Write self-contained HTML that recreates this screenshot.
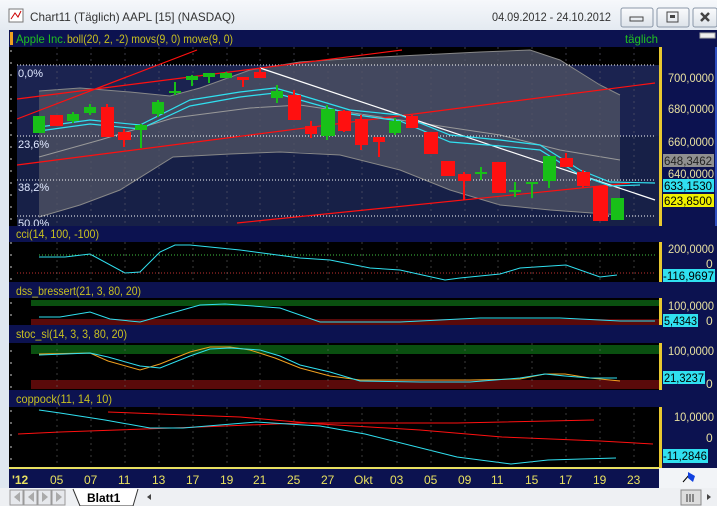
<!DOCTYPE html>
<html><head><meta charset="utf-8"><style>
html,body{margin:0;padding:0;width:717px;height:506px;overflow:hidden;background:#eef2f6;}
svg{display:block;font-family:"Liberation Sans",sans-serif;}
</style></head><body>
<svg width="717" height="506" viewBox="0 0 717 506" xmlns="http://www.w3.org/2000/svg">
<defs>
<linearGradient id="tb" x1="0" y1="0" x2="0" y2="1"><stop offset="0" stop-color="#f6f8fb"/><stop offset="1" stop-color="#e4eaf1"/></linearGradient>
<linearGradient id="btn" x1="0" y1="0" x2="0" y2="1"><stop offset="0" stop-color="#fafbfd"/><stop offset="1" stop-color="#dde3ea"/></linearGradient>
</defs>
<rect x="0" y="0" width="717" height="30" fill="url(#tb)"/>
<rect x="9" y="9" width="14" height="13" fill="#fff" stroke="#777"/>
<path d="M11 19 L15 13 L18 17 L21 11" stroke="#c00" fill="none"/>
<text x="30" y="21" font-size="12" fill="#333" textLength="205" lengthAdjust="spacingAndGlyphs">Chart11 (Täglich)  AAPL [15] (NASDAQ)</text>
<text x="492" y="21" font-size="12" fill="#333" textLength="119" lengthAdjust="spacingAndGlyphs">04.09.2012 - 24.10.2012</text>
<rect x="621" y="8" width="32" height="19" rx="2" fill="url(#btn)" stroke="#8a97a8"/>
<rect x="630" y="17" width="13" height="4" fill="none" stroke="#444"/>
<rect x="657" y="8" width="32" height="19" rx="2" fill="url(#btn)" stroke="#8a97a8"/>
<rect x="667" y="12" width="11" height="10" fill="none" stroke="#444"/><rect x="670" y="15" width="5" height="3" fill="#444"/>
<rect x="693" y="8" width="24" height="19" rx="2" fill="url(#btn)" stroke="#8a97a8"/>
<path d="M701 13 L709 21 M709 13 L701 21" stroke="#444" stroke-width="2.5"/>

<rect x="0" y="30" width="9" height="458" fill="#dfe7f0"/>
<rect x="9" y="30" width="708" height="17" fill="#0c1250"/>
<rect x="10" y="32" width="3" height="13" fill="#f0a020"/>
<text x="16" y="43" font-size="12" fill="#20c020" textLength="50" lengthAdjust="spacingAndGlyphs">Apple Inc.</text>
<text x="67" y="43" font-size="12" fill="#c8c020" textLength="166" lengthAdjust="spacingAndGlyphs">boll(20, 2, -2) movs(9, 0) move(9, 0)</text>
<text x="625" y="43" font-size="12" fill="#20c020" textLength="33" lengthAdjust="spacingAndGlyphs">täglich</text>
<rect x="700" y="33" width="15" height="5" fill="#eee" stroke="#aaa"/>

<rect x="9" y="47" width="650" height="179" fill="#000"/>
<rect x="17" y="65" width="642" height="161" fill="#1b2350"/>
<rect x="17" y="136" width="642" height="90" fill="#172047"/>
<polygon fill="#4a4f62" opacity="0.85" points="39,91 80,88 130,92 170,96 200,88 250,70 300,62 360,58 400,56 440,54 480,52 530,50 560,60 600,85 620,95 620,215 550,210 500,205 450,190 400,170 340,155 300,152 280,152 230,154 173,157 120,190 80,205 39,217"/>
<polyline fill="none" stroke="#888" points="39,91 80,88 130,92 170,96 200,88 250,70 300,62 360,58 400,56 440,54 480,52 530,50 560,60 600,85 620,95"/>
<polyline fill="none" stroke="#888" points="39,217 80,205 120,190 173,157 230,154 280,152 340,155 400,170 450,190 500,205 550,210 620,215"/>
<polyline fill="none" stroke="#999" points="39,157 100,140 173,118 250,108 300,105 400,120 500,135 560,150 620,160"/>
<g stroke="#fff" stroke-dasharray="1,2">
<line x1="17" y1="65" x2="655" y2="65"/><line x1="17" y1="136" x2="655" y2="136"/>
<line x1="17" y1="180" x2="655" y2="180"/><line x1="17" y1="216" x2="655" y2="216"/>
</g>
<g fill="#e0e8ff" font-size="11"><text x="18" y="77">0,0%</text><text x="18" y="148">23,6%</text><text x="18" y="191">38,2%</text><text x="18" y="227">50,0%</text></g>
<g stroke="#556" stroke-dasharray="2,4" opacity="0.7">
<path d="M57 47V226M91 47V226M125 47V226M159 47V226M193 47V226M227 47V226M260 47V226M294 47V226M328 47V226M362 47V226M397 47V226M431 47V226M465 47V226M498 47V226M532 47V226M566 47V226M600 47V226M634 47V226"/>
</g>
<g stroke="#ff1010" stroke-width="1.2" fill="none">
<line x1="17" y1="119" x2="197" y2="50"/>
<line x1="17" y1="99" x2="402" y2="50"/>
<line x1="17" y1="165" x2="655" y2="83"/>
<line x1="237" y1="223" x2="630" y2="183"/>
</g>
<line x1="260" y1="68" x2="655" y2="200" stroke="#fff" stroke-width="1.2"/>
<polyline fill="none" stroke="#30e0f0" stroke-width="1.2" points="39,127 90,120 140,125 190,100 240,92 275,88 300,95 350,110 400,115 450,135 500,140 540,145 580,170 610,182 655,183"/>
<polyline fill="none" stroke="#30e0f0" stroke-width="1.2" points="39,131 90,124 140,129 190,106 240,97 275,93 300,100 350,114 400,121 450,142 500,146 540,150 580,175 610,186 640,185"/>
<g stroke-width="2">
<g fill="#18c018" stroke="#18c018">
<rect x="34" y="117" width="10" height="15"/>
<line x1="73" y1="112" x2="73" y2="123"/><rect x="68" y="115" width="10" height="5"/>
<line x1="90" y1="104" x2="90" y2="115"/><rect x="85" y="108" width="10" height="4"/>
<line x1="141" y1="124" x2="141" y2="148"/><rect x="136" y="126" width="10" height="3"/>
<line x1="158" y1="100" x2="158" y2="117"/><rect x="153" y="103" width="10" height="10"/>
<line x1="175" y1="82" x2="175" y2="95"/><line x1="169" y1="92" x2="181" y2="92"/>
<line x1="192" y1="75" x2="192" y2="86"/><rect x="187" y="77" width="10" height="2"/>
<line x1="209" y1="73" x2="209" y2="83"/><rect x="204" y="74" width="10" height="2"/>
<line x1="226" y1="72" x2="226" y2="77"/><rect x="221" y="74" width="10" height="3"/>
<line x1="277" y1="85" x2="277" y2="103"/><rect x="272" y="92" width="10" height="5"/>
<line x1="327" y1="105" x2="327" y2="140"/><rect x="322" y="110" width="12" height="25"/>
<line x1="395" y1="118" x2="395" y2="135"/><rect x="390" y="122" width="10" height="10"/>
<line x1="481" y1="167" x2="481" y2="180"/><line x1="475" y1="173" x2="487" y2="173"/>
<line x1="515" y1="182" x2="515" y2="197"/><line x1="509" y1="191" x2="521" y2="191"/>
<line x1="532" y1="182" x2="532" y2="198"/><line x1="526" y1="183" x2="538" y2="183"/>
<line x1="549" y1="157" x2="549" y2="188"/><rect x="544" y="157" width="11" height="23"/>
<line x1="617" y1="198" x2="617" y2="220"/><rect x="612" y="199" width="11" height="20"/>
</g>
<g fill="#ff1010" stroke="#ff1010">
<rect x="51" y="116" width="11" height="9"/>
<line x1="107" y1="104" x2="107" y2="136"/><rect x="102" y="108" width="11" height="28"/>
<line x1="124" y1="129" x2="124" y2="147"/><rect x="119" y="133" width="11" height="6"/>
<line x1="243" y1="78" x2="243" y2="87"/><rect x="238" y="78" width="10" height="1"/>
<line x1="260" y1="68" x2="260" y2="77"/><rect x="255" y="73" width="10" height="4"/>
<line x1="294" y1="90" x2="294" y2="119"/><rect x="289" y="96" width="11" height="23"/>
<line x1="311" y1="121" x2="311" y2="138"/><rect x="306" y="127" width="10" height="6"/>
<line x1="344" y1="110" x2="344" y2="132"/><rect x="339" y="112" width="11" height="18"/>
<line x1="361" y1="115" x2="361" y2="150"/><rect x="356" y="120" width="11" height="24"/>
<line x1="379" y1="138" x2="379" y2="157"/><rect x="374" y="138" width="10" height="3"/>
<line x1="412" y1="115" x2="412" y2="128"/><rect x="407" y="117" width="10" height="10"/>
<rect x="425" y="133" width="12" height="20"/>
<rect x="442" y="162" width="12" height="13"/>
<line x1="464" y1="172" x2="464" y2="200"/><rect x="459" y="175" width="11" height="5"/>
<rect x="493" y="163" width="12" height="29"/>
<line x1="566" y1="153" x2="566" y2="166"/><rect x="561" y="159" width="11" height="7"/>
<line x1="583" y1="170" x2="583" y2="188"/><rect x="578" y="173" width="11" height="12"/>
<rect x="594" y="187" width="13" height="33"/>
</g></g>

<rect x="9" y="47" width="8" height="420" fill="#000"/>
<g stroke="#ccc" stroke-dasharray="2,10"><line x1="11" y1="50" x2="11" y2="466"/></g>

<rect x="659" y="47" width="58" height="180" fill="#0c1250"/>
<rect x="659" y="47" width="3" height="180" fill="#e8c830"/>
<rect x="715" y="47" width="2" height="180" fill="#3050c0"/>
<g fill="#e8e0a0" font-size="12">
<text x="668" y="82" textLength="46" lengthAdjust="spacingAndGlyphs">700,0000</text><text x="668" y="113" textLength="46" lengthAdjust="spacingAndGlyphs">680,0000</text><text x="668" y="146" textLength="46" lengthAdjust="spacingAndGlyphs">660,0000</text><text x="668" y="178" textLength="46" lengthAdjust="spacingAndGlyphs">640,0000</text>
</g>
<rect x="663" y="154" width="51" height="13" fill="#909090"/><text x="664" y="165" font-size="12" fill="#222" textLength="48" lengthAdjust="spacingAndGlyphs">648,3462</text>
<rect x="663" y="179" width="51" height="13" fill="#30e0f0"/><text x="664" y="190" font-size="12" fill="#000" textLength="48" lengthAdjust="spacingAndGlyphs">633,1530</text>
<rect x="663" y="194" width="51" height="13" fill="#f0f000"/><text x="664" y="205" font-size="12" fill="#000" textLength="48" lengthAdjust="spacingAndGlyphs">623,8500</text>

<g font-size="12" fill="#c8c020">
<rect x="9" y="226" width="708" height="16" fill="#0c1250"/><text x="16" y="238" textLength="83" lengthAdjust="spacingAndGlyphs">cci(14, 100, -100)</text>
<rect x="9" y="282" width="708" height="16" fill="#0c1250"/><text x="16" y="295" textLength="125" lengthAdjust="spacingAndGlyphs">dss_bressert(21, 3, 80, 20)</text>
<rect x="9" y="325" width="708" height="18" fill="#0c1250"/><text x="16" y="338" textLength="111" lengthAdjust="spacingAndGlyphs">stoc_sl(14, 3, 3, 80, 20)</text>
<rect x="9" y="390" width="708" height="17" fill="#0c1250"/><text x="16" y="403" textLength="96" lengthAdjust="spacingAndGlyphs">coppock(11, 14, 10)</text>
</g>
<rect x="17" y="242" width="642" height="40" fill="#000"/>
<rect x="17" y="298" width="642" height="27" fill="#000"/>
<rect x="17" y="343" width="642" height="47" fill="#000"/>
<rect x="17" y="407" width="642" height="61" fill="#000"/>
<line x1="39" y1="255" x2="655" y2="255" stroke="#40c040" stroke-dasharray="1,2"/>
<line x1="17" y1="273" x2="655" y2="273" stroke="#c03030" stroke-dasharray="1,2"/>
<polyline fill="none" stroke="#30e0f0" points="39,257 65,257 90,254 125,273 140,272 160,252 175,245 190,245 240,250 300,258 330,260 370,268 400,270 445,280 460,278 500,274 520,268 566,265 600,277 617,275"/>
<rect x="31" y="300" width="628" height="6" fill="#0a5010"/>
<rect x="31" y="319" width="628" height="6" fill="#5a0a0a"/>
<polyline fill="none" stroke="#30e0f0" points="39,317 60,317 90,312 110,319 140,322 200,305 225,304 280,308 320,322 400,322 440,320 480,318 560,318 620,321 655,321"/>
<rect x="31" y="345" width="628" height="9" fill="#0a5010"/>
<rect x="31" y="380" width="628" height="9" fill="#5a0a0a"/>
<polyline fill="none" stroke="#f0a020" points="39,354 90,353 108,361 140,370 160,364 190,352 210,347 230,347 250,350 275,358 300,368 330,376 360,380 410,380 470,380 520,379 545,374 565,374 590,378 620,381"/>
<polyline fill="none" stroke="#30e0f0" points="39,355 90,353 108,357 140,366 160,368 190,356 210,349 230,348 260,350 280,356 300,365 330,372 360,381 420,382 470,382 520,378 545,374 565,376 590,378 617,378"/>
<polyline fill="none" stroke="#ff1010" points="18,434 60,432 200,427 300,423 457,423 594,420"/>
<polyline fill="none" stroke="#ff1010" points="108,412 240,417 320,424 420,430 502,437 600,441 653,444"/>
<polyline fill="none" stroke="#30e0f0" points="39,410 60,413 105,420 150,428 183,428 256,422 320,426 365,434 457,457 511,464 548,460 616,458"/>
<g stroke="#666" stroke-dasharray="2,4" opacity="0.6">
<path d="M57 242V282M91 242V282M125 242V282M159 242V282M193 242V282M227 242V282M260 242V282M294 242V282M328 242V282M362 242V282M397 242V282M431 242V282M465 242V282M498 242V282M532 242V282M566 242V282M600 242V282M634 242V282"/>
<path d="M57 407V468M91 407V468M125 407V468M159 407V468M193 407V468M227 407V468M260 407V468M294 407V468M328 407V468M362 407V468M397 407V468M431 407V468M465 407V468M498 407V468M532 407V468M566 407V468M600 407V468M634 407V468"/>
<path d="M57 343V390M125 343V390M193 343V390M260 343V390M328 343V390M397 343V390M465 343V390M532 343V390M600 343V390"/>
</g>
<g>
<rect x="659" y="242" width="58" height="40" fill="#0c1250"/><rect x="659" y="242" width="3" height="40" fill="#e8c830"/>
<rect x="659" y="298" width="58" height="27" fill="#0c1250"/><rect x="659" y="298" width="3" height="27" fill="#e8c830"/>
<rect x="659" y="343" width="58" height="47" fill="#0c1250"/><rect x="659" y="343" width="3" height="47" fill="#e8c830"/>
<rect x="659" y="407" width="58" height="61" fill="#0c1250"/><rect x="659" y="407" width="3" height="61" fill="#e8c830"/>
</g>
<g fill="#e8e0a0" font-size="12">
<text x="668" y="253" textLength="46" lengthAdjust="spacingAndGlyphs">200,0000</text><text x="706" y="268">0</text>
<text x="668" y="310" textLength="46" lengthAdjust="spacingAndGlyphs">100,0000</text><text x="706" y="325">0</text>
<text x="668" y="355" textLength="46" lengthAdjust="spacingAndGlyphs">100,0000</text><text x="706" y="388">0</text>
<text x="674" y="421" textLength="40" lengthAdjust="spacingAndGlyphs">10,0000</text><text x="706" y="442">0</text>
</g>
<rect x="663" y="269" width="52" height="13" fill="#30e0f0"/><text x="663" y="280" font-size="12" fill="#000" textLength="51" lengthAdjust="spacingAndGlyphs">-116,9697</text>
<rect x="663" y="314" width="35" height="13" fill="#30e0f0"/><text x="664" y="325" font-size="12" fill="#000" textLength="33" lengthAdjust="spacingAndGlyphs">5,4343</text>
<rect x="663" y="371" width="42" height="13" fill="#30e0f0"/><text x="664" y="382" font-size="12" fill="#000" textLength="40" lengthAdjust="spacingAndGlyphs">21,3237</text>
<rect x="663" y="449" width="45" height="14" fill="#30e0f0"/><text x="663" y="460" font-size="12" fill="#000" textLength="44" lengthAdjust="spacingAndGlyphs">-11,2846</text>

<rect x="9" y="468" width="650" height="20" fill="#0c1250"/>
<rect x="9" y="467" width="650" height="2" fill="#e8e060"/>
<g fill="#e8e060" font-size="12">
<text x="12" y="484" font-weight="bold">'12</text>
<text x="50" y="484">05</text><text x="84" y="484">07</text><text x="118" y="484">11</text><text x="152" y="484">13</text><text x="186" y="484">17</text><text x="220" y="484">19</text><text x="253" y="484">21</text><text x="287" y="484">25</text><text x="321" y="484">27</text><text x="354" y="484">Okt</text><text x="390" y="484">03</text><text x="424" y="484">05</text><text x="458" y="484">09</text><text x="491" y="484">11</text><text x="525" y="484">15</text><text x="559" y="484">17</text><text x="593" y="484">19</text><text x="627" y="484">23</text>
</g>
<rect x="659" y="468" width="58" height="20" fill="#f2f4f7"/>
<path d="M683 482 L690 474" stroke="#000"/><path d="M688 472 L695 476 L693 482 L688 478Z" fill="#1040e0"/>

<rect x="0" y="488" width="717" height="18" fill="#eef0f3"/>
<g stroke="#999">
<rect x="10" y="490" width="13" height="15" fill="#e6e8ec"/><rect x="24" y="490" width="13" height="15" fill="#e6e8ec"/><rect x="38" y="490" width="13" height="15" fill="#e6e8ec"/><rect x="52" y="490" width="13" height="15" fill="#e6e8ec"/>
</g>
<g fill="#aaa"><path d="M14 497 L20 492 V502Z"/><path d="M28 497 L34 492 V502Z"/><path d="M42 492 L48 497 L42 502Z"/><path d="M56 492 L62 497 L56 502Z"/></g>
<path d="M73 489 L80 506 L133 506 L138 489" fill="#fff" stroke="#333"/>
<text x="87" y="502" font-size="12" font-weight="bold" fill="#000">Blatt1</text>
<path d="M147 497 L151 494 V500Z" fill="#444"/>
<rect x="681" y="490" width="20" height="15" fill="#ddd" stroke="#888"/>
<path d="M687 494V502M690 494V502M693 494V502" stroke="#333"/>
<path d="M707 494 L711 497 L707 500Z" fill="#444"/>
</svg>
</body></html>
